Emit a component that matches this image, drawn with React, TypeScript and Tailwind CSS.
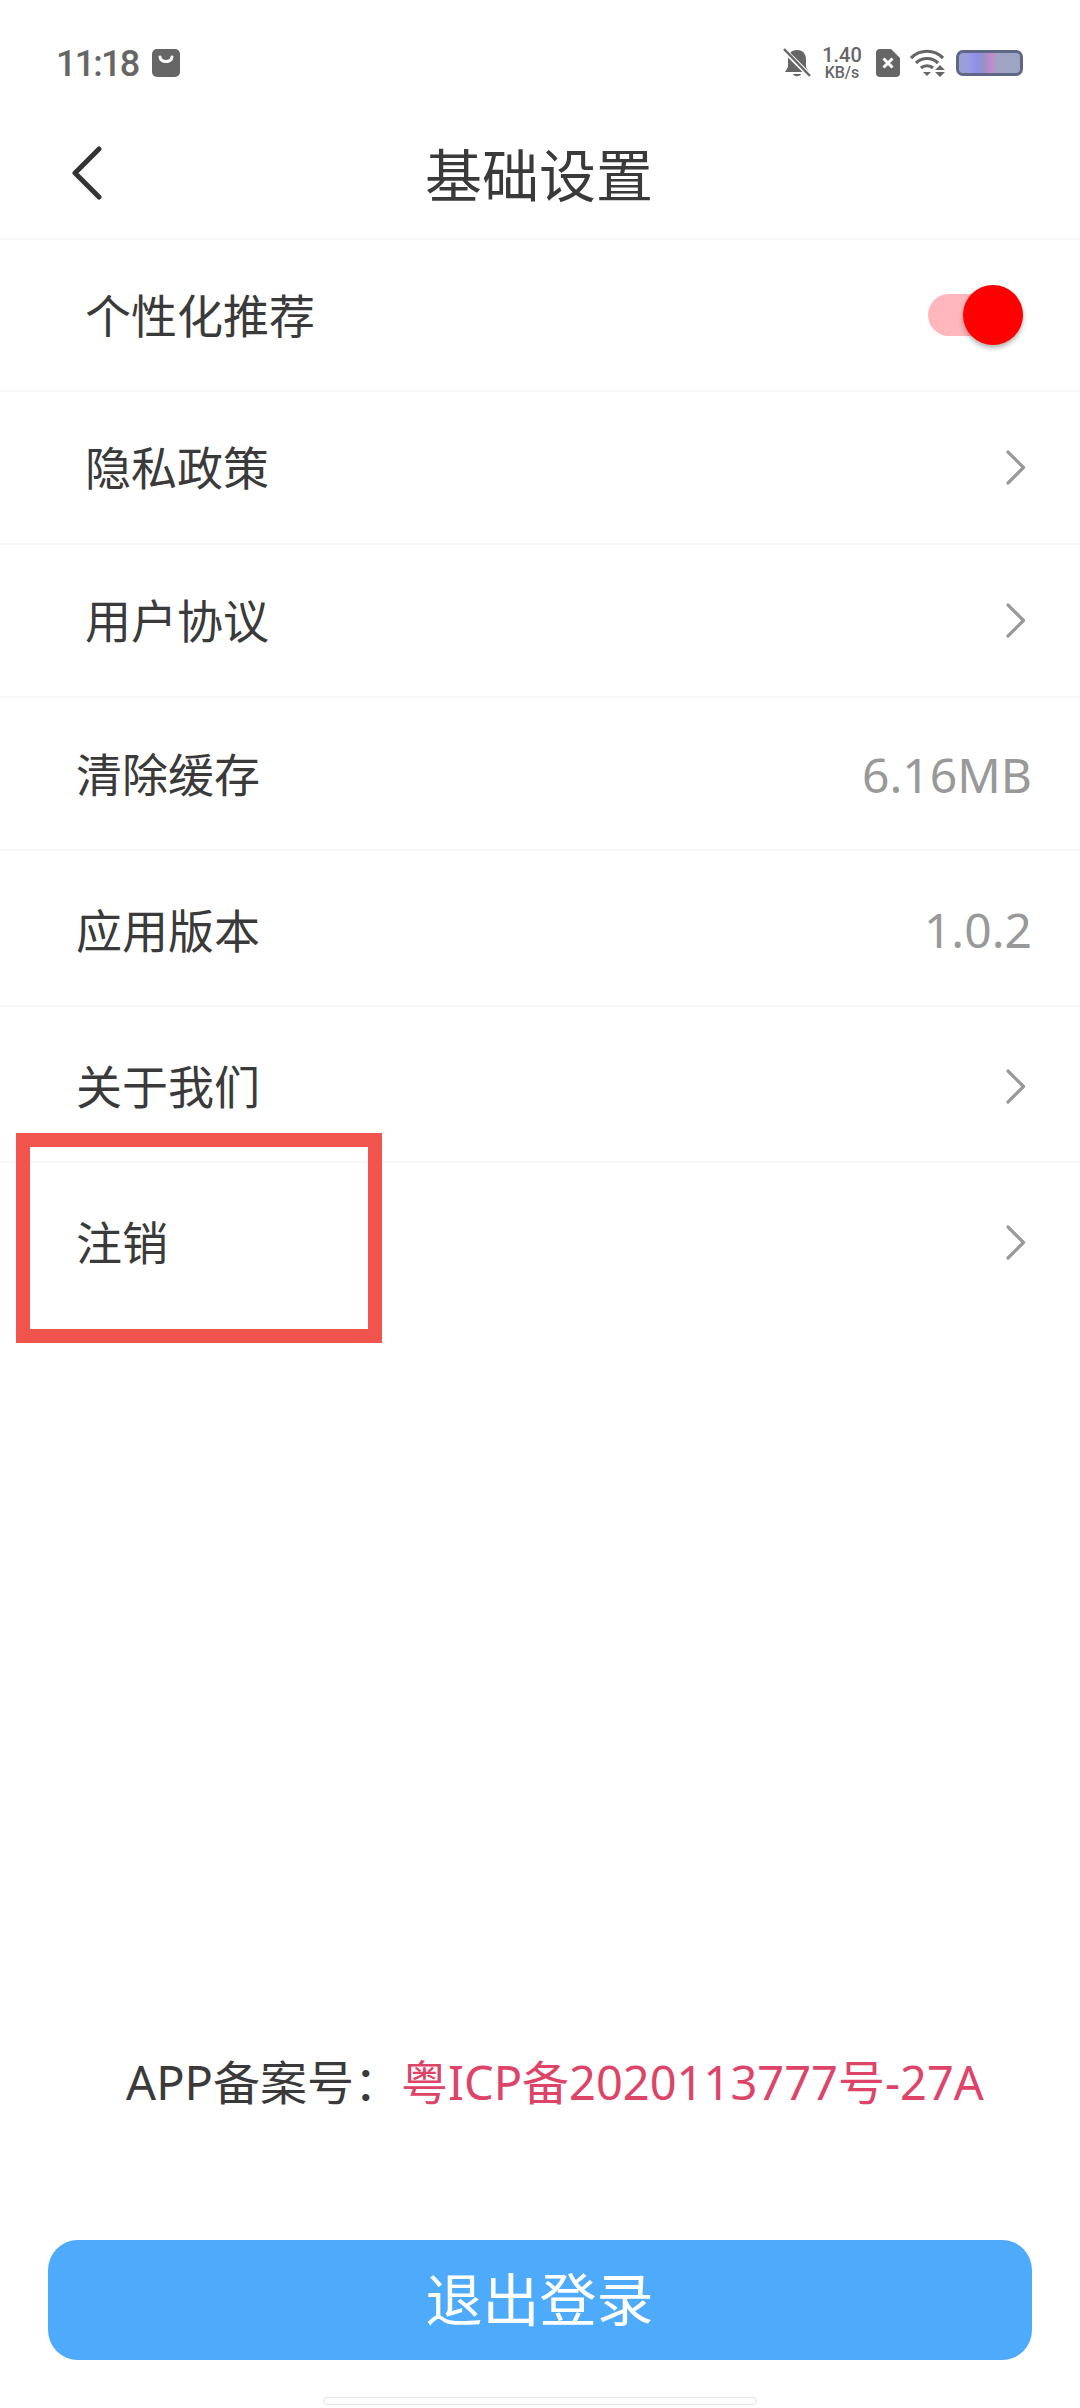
const font = '[font-family:"Noto_Sans","Noto_Sans_CJK_SC",sans-serif]';

function Chevron() {
  return (
    <svg width="20" height="35" viewBox="0 0 20 35" fill="none" className="block">
      <path d="M2 2 L17.5 17.5 L2 33" stroke="#999999" strokeWidth="3.2" strokeLinecap="round" strokeLinejoin="round" />
    </svg>
  );
}

function StatusBar() {
  return (
    <div className="h-[124px] shrink-0 flex items-center justify-between pl-[56px] pr-[57px] pt-[2px]">
      <div className="flex items-center gap-[14px]">
        <span className="text-[36px] leading-[40px] font-medium tracking-[-1.8px] text-[#666666] [font-family:Roboto,sans-serif] mt-[1px]">11:18</span>
        <svg width="28" height="28" viewBox="0 0 28 28">
          <rect width="28" height="28" rx="5" fill="#666666" />
          <path d="M8 8 C9 14 19 14 20 8" stroke="#ffffff" strokeWidth="3" fill="none" strokeLinecap="round" />
        </svg>
      </div>
      <div className="flex items-center">
        <svg width="28" height="30" viewBox="0 0 28 30" className="mr-[8px]">
          <path d="M14 2 C20 2 23 6 23 12 L23 19 L26 24 L2 24 L5 19 L5 12 C5 6 8 2 14 2 Z" fill="#666666" />
          <path d="M10 26 C11 29 17 29 18 26 Z" fill="#666666" />
          <path d="M1 2 L27 28" stroke="#ffffff" strokeWidth="5" />
          <path d="M1 1 L27 28" stroke="#666666" strokeWidth="2.5" />
        </svg>
        <div className="flex flex-col items-center w-[46px] text-[#666666] font-medium [font-family:Roboto,sans-serif]">
          <span className="text-[20px] leading-[20px]">1.40</span>
          <span className="text-[16px] leading-[16px]">KB/s</span>
        </div>
        <svg width="24" height="28" viewBox="0 0 24 28" className="ml-[11px]">
          <path d="M4 0 L15 0 L24 9 L24 24 Q24 28 20 28 L4 28 Q0 28 0 24 L0 4 Q0 0 4 0 Z" fill="#666666" />
          <path d="M7.5 9.5 L16.5 18.5 M16.5 9.5 L7.5 18.5" stroke="#ffffff" strokeWidth="3" />
        </svg>
        <svg width="36" height="28" viewBox="0 0 36 28" className="ml-[10px]">
          <path d="M1 9 C10 0 24 0 33 9" stroke="#666666" strokeWidth="3.2" fill="none" />
          <path d="M6 14 C12 8 22 8 28 14" stroke="#666666" strokeWidth="3.2" fill="none" />
          <path d="M11 19 C14 16 20 16 23 19" stroke="#666666" strokeWidth="3.2" fill="none" />
          <path d="M13 23 L21 23 L17 27 Z" fill="#666666" />
          <path d="M30 16 L35 21 L25 21 Z M25 23 L35 23 L30 28 Z" fill="#666666" />
        </svg>
        <div className="ml-[10px] w-[67px] h-[26px] rounded-[7px] border-[3px] border-[#5f6787] bg-[linear-gradient(90deg,#98a3cc_0%,#9a9ce0_15%,#8f8fe8_30%,#9a92c8_42%,#c586cf_52%,#a2a3c0_62%,#9ca5c6_100%)]" />
      </div>
    </div>
  );
}

function Row({ label, className, right }: { label: string; className: string; right: React.ReactNode }) {
  return (
    <div className={`shrink-0 flex items-center justify-between border-b-2 border-[#f8f8f8] pr-[48px] ${className}`}>
      <span className="text-[46px] text-[#3a3a3a]">{label}</span>
      {right}
    </div>
  );
}

export default function App() {
  const chevron = (
    <span className="mr-[6px]">
      <Chevron />
    </span>
  );
  return (
    <div className={`relative w-[1080px] h-[2408px] bg-white flex flex-col overflow-hidden ${font}`}>
      <StatusBar />

      <div className="relative h-[116px] shrink-0 flex items-center justify-center border-b-2 border-[#f8f8f8]">
        <svg width="32" height="54" viewBox="0 0 32 54" className="absolute left-[71px] top-[22px]">
          <path d="M28 3 L4 27 L28 51" stroke="#333333" strokeWidth="5" fill="none" strokeLinecap="round" strokeLinejoin="round" />
        </svg>
        <h1 className="text-[57px] leading-none text-[#3a3a3a] -mt-[12px] -ml-[2px]">基础设置</h1>
      </div>

      <Row
        label="个性化推荐"
        className="h-[152px] pl-[85px]"
        right={
          <div className="relative w-[95px] h-[42px] mr-[9px] rounded-full bg-[#ffb6bc]">
            <div className="absolute right-0 top-[-9px] w-[60px] h-[60px] rounded-full bg-[#ff0000] shadow-[0_3px_5px_rgba(0,0,0,0.3)]" />
          </div>
        }
      />
      <Row label="隐私政策" className="h-[153px] pl-[85px]" right={chevron} />
      <Row label="用户协议" className="h-[153px] pl-[85px]" right={chevron} />
      <Row
        label="清除缓存"
        className="h-[153px] pl-[76px] pt-[2px]"
        right={<span className="text-[48px] text-[#999999]">6.16MB</span>}
      />
      <Row
        label="应用版本"
        className="h-[156px] pl-[76px] pt-[4px]"
        right={<span className="text-[48px] text-[#999999]">1.0.2</span>}
      />
      <Row label="关于我们" className="h-[156px] pl-[76px] pt-[4px]" right={chevron} />
      <div className="h-[156px] shrink-0 flex items-center justify-between pl-[76px] pr-[48px] pt-[3px]">
        <span className="text-[46px] text-[#3a3a3a]">注销</span>
        {chevron}
      </div>

      {/* red highlight box drawn over the list */}
      <div className="absolute left-[16px] top-[1133px] w-[366px] h-[210px] border-[14px] border-[#f0544c]" />

      <div className="mt-auto flex flex-col items-center">
        <p className="ml-[30px] text-[47px] leading-[60px] text-[#3a3a3a] mb-[128px]">
          APP备案号：<span className="text-[#dd4468]">粤ICP备2020113777号-27A</span>
        </p>
        <button className="w-[984px] h-[120px] rounded-[30px] bg-[#4eabfb] text-white text-[57px] -ml-[1px]">退出登录</button>
        <div className="mt-[37px] mb-[3px] w-[434px] h-[8px] rounded-[4px] bg-white border border-[#e4e4e4]" />
      </div>
    </div>
  );
}
